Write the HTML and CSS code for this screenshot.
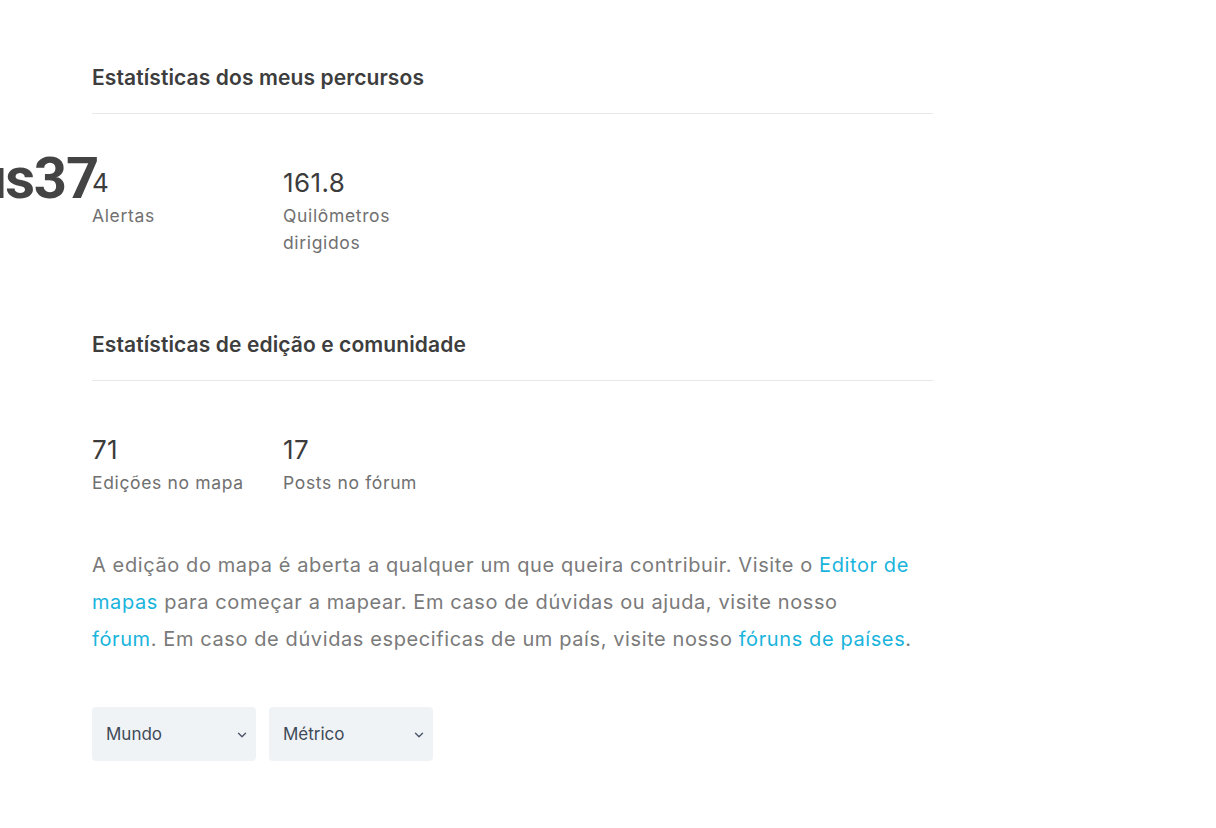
FILE: index.html
```html
<!DOCTYPE html>
<html lang="pt">
<head>
<meta charset="utf-8">
<link rel="stylesheet" href="styles.css">
</head>
<body>
<div class="username">marcus37</div>
<main class="content">
  <section class="block">
    <h2 class="title">Estatísticas dos meus percursos</h2>
    <div class="stats">
      <div class="stat"><div class="num">4</div><div class="label">Alertas</div></div>
      <div class="stat"><div class="num">161.8</div><div class="label">Quilômetros dirigidos</div></div>
    </div>
  </section>
  <section class="block">
    <h2 class="title">Estatísticas de edição e comunidade</h2>
    <div class="stats">
      <div class="stat"><div class="num">71</div><div class="label">Edições no mapa</div></div>
      <div class="stat"><div class="num">17</div><div class="label">Posts no fórum</div></div>
    </div>
  </section>
  <p class="info">A edição do mapa é aberta a qualquer um que queira contribuir. Visite o <a href="#">Editor de mapas</a> para começar a mapear. Em caso de dúvidas ou ajuda, visite nosso<br><a href="#">fórum</a>. Em caso de dúvidas especificas de um país, visite nosso <a href="#">fóruns de países</a>.</p>
  <div class="selects">
    <div class="select"><span>Mundo</span><svg class="chev" width="10" height="6" viewBox="0 0 10 6"><path d="M1.5 1.2l3.5 3.5 3.5-3.5" fill="none" stroke="#4a5566" stroke-width="1.4" stroke-linecap="round" stroke-linejoin="round"/></svg></div>
    <div class="select"><span>Métrico</span><svg class="chev" width="10" height="6" viewBox="0 0 10 6"><path d="M1.5 1.2l3.5 3.5 3.5-3.5" fill="none" stroke="#4a5566" stroke-width="1.4" stroke-linecap="round" stroke-linejoin="round"/></svg></div>
  </div>
</main>
</body>
</html>
```
FILE: styles.css
```css
html, body { margin: 0; padding: 0; background: #fff; }
body { position: relative; width: 1216px; height: 828px; overflow: hidden; font-family: "Inter", "Liberation Sans", sans-serif; }
.username {
  position: absolute; right: 1118px; top: 142px;
  font-family: "Roboto", "Liberation Sans", sans-serif; font-weight: 700;
  font-size: 58px; line-height: 72px; color: #444; letter-spacing: -1.2px; white-space: nowrap;
}
.content { width: 841px; padding: 64px 0 0 92px; }
.block { margin-bottom: 75px; }
.block + .block { margin-bottom: 51px; }
.title {
  margin: 0; padding-bottom: 21px; border-bottom: 1px solid #e8e8e8;
  font-family: "Inter", sans-serif; font-weight: 600; font-size: 21px; line-height: 28px;
  color: #3d3d3d; letter-spacing: 0.1px;
}
.stats { display: flex; padding-top: 50px; }
.stat { width: 160px; margin-right: 31px; }
.num { font-size: 26px; line-height: 38px; color: #3c3c3c; letter-spacing: 0.4px; }
.label { font-size: 17.5px; line-height: 27px; color: #707070; letter-spacing: 0.65px; }
.info { margin: 0; font-size: 20px; line-height: 37px; color: #7a7a7a; letter-spacing: 0.6px; }
.info a { color: #19b4dc; text-decoration: none; }
.selects { display: flex; gap: 13px; margin-top: 49px; }
.select {
  width: 164px; height: 54px; box-sizing: border-box; padding: 0 9px 0 14px;
  display: flex; align-items: center; justify-content: space-between;
  background: #f0f3f6; border-radius: 4px; font-size: 17px; color: #3f4a59;
}
.chev { margin-top: 2px; }
```
